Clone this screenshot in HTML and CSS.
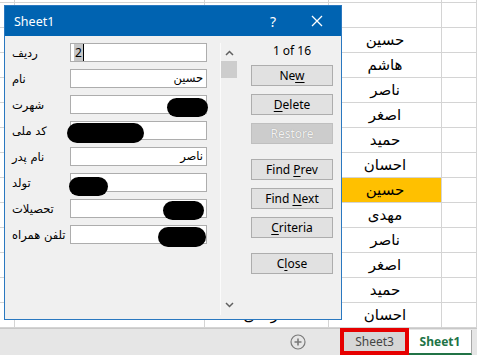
FILE: index.html
```html
<!DOCTYPE html>
<html lang="fa">
<head>
    <meta charset="UTF-8">
    <title>Sheet1 - فرم</title>
    <link rel="stylesheet" href="styles.css">
</head>
<body>
    <div class="sheet">
        <div class="row row-top"><div class="cell"></div><div class="cell"></div><div class="cell"></div><div class="cell"></div><div class="cell"></div></div>
        <div class="row"><div class="cell"></div><div class="cell"></div><div class="cell"></div><div class="cell"></div><div class="cell"></div></div>
        <div class="row"><div class="cell"></div><div class="cell"></div><div class="cell"></div><div class="cell name">حسين</div><div class="cell"></div></div>
        <div class="row"><div class="cell"></div><div class="cell"></div><div class="cell"></div><div class="cell name">هاشم</div><div class="cell"></div></div>
        <div class="row"><div class="cell"></div><div class="cell"></div><div class="cell"></div><div class="cell name">ناصر</div><div class="cell"></div></div>
        <div class="row"><div class="cell"></div><div class="cell"></div><div class="cell"></div><div class="cell name">اصغر</div><div class="cell"></div></div>
        <div class="row"><div class="cell"></div><div class="cell"></div><div class="cell"></div><div class="cell name">حميد</div><div class="cell"></div></div>
        <div class="row"><div class="cell"></div><div class="cell"></div><div class="cell"></div><div class="cell name">احسان</div><div class="cell"></div></div>
        <div class="row"><div class="cell"></div><div class="cell"></div><div class="cell"></div><div class="cell name active">حسين</div><div class="cell"></div></div>
        <div class="row"><div class="cell"></div><div class="cell"></div><div class="cell"></div><div class="cell name">مهدی</div><div class="cell"></div></div>
        <div class="row"><div class="cell"></div><div class="cell"></div><div class="cell"></div><div class="cell name">ناصر</div><div class="cell"></div></div>
        <div class="row"><div class="cell"></div><div class="cell"></div><div class="cell"></div><div class="cell name">اصغر</div><div class="cell"></div></div>
        <div class="row"><div class="cell"></div><div class="cell"></div><div class="cell"></div><div class="cell name">حميد</div><div class="cell"></div></div>
        <div class="row"><div class="cell"></div><div class="cell name">۰۹۱۱۱۱۱۱۱۱۱</div><div class="cell name">کاردانی</div><div class="cell name">احسان</div><div class="cell"></div></div>
    </div>

    <div class="tabbar">
        <div class="add-sheet">
            <svg width="16" height="16" viewBox="0 0 16 16">
                <circle cx="8" cy="8" r="7" fill="none" stroke="#7a7a7a" stroke-width="1.2"/>
                <path d="M8 4.5v7M4.5 8h7" stroke="#7a7a7a" stroke-width="1.6"/>
            </svg>
        </div>
        <div class="tab tab-marked">Sheet3</div>
        <div class="tab tab-active">Sheet1</div>
        <div class="tab-rest"></div>
    </div>

    <div class="dialog">
        <div class="titlebar">
            <span class="title">Sheet1</span>
            <span class="help">?</span>
            <span class="close-x">
                <svg width="12" height="12" viewBox="0 0 12 12">
                    <path d="M1 1l10 10M11 1L1 11" stroke="#fff" stroke-width="1.3"/>
                </svg>
            </span>
        </div>
        <div class="dialog-body">
            <div class="fields">
                <div class="field"><label>ردیف</label><div class="input ltr"><span class="sel">2</span></div></div>
                <div class="field"><label>نام</label><div class="input">حسين</div></div>
                <div class="field"><label>شهرت</label><div class="input"><i class="blot b3"></i></div></div>
                <div class="field"><label>کد ملی</label><div class="input"><i class="blot b4"></i></div></div>
                <div class="field"><label>نام پدر</label><div class="input">ناصر</div></div>
                <div class="field"><label>تولد</label><div class="input"><i class="blot b6"></i></div></div>
                <div class="field"><label>تحصیلات</label><div class="input"><i class="blot b7"></i></div></div>
                <div class="field"><label>تلفن همراه</label><div class="input"><i class="blot b8"></i></div></div>
            </div>

            <div class="scrollbar">
                <svg class="arrow" width="9" height="6" viewBox="0 0 9 6"><path d="M1 5l3.5-3.5L8 5" fill="none" stroke="#606060" stroke-width="1.5"/></svg>
                <div class="thumb"></div>
                <div class="track"></div>
                <svg class="arrow" width="9" height="6" viewBox="0 0 9 6"><path d="M1 1l3.5 3.5L8 1" fill="none" stroke="#606060" stroke-width="1.5"/></svg>
            </div>

            <div class="buttons">
                <div class="counter">1 of 16</div>
                <button>Ne<u>w</u></button>
                <button><u>D</u>elete</button>
                <button class="disabled">Restore</button>
                <button class="group">Find <u>P</u>rev</button>
                <button>Find <u>N</u>ext</button>
                <button><u>C</u>riteria</button>
                <button class="group">C<u>l</u>ose</button>
            </div>
        </div>
    </div>
</body>
</html>
```

FILE: styles.css
```css
body {
    margin: 0;
    width: 477px;
    height: 355px;
    overflow: hidden;
    background: #fff;
    font-family: "Noto Sans", "Open Sans", sans-serif;
    position: relative;
}

/* spreadsheet grid */
.sheet {
    display: flex;
    flex-direction: column;
}

.row {
    display: grid;
    grid-template-columns: 15px 190px 124px 113px 35px;
    height: 25px;
}

.row-top {
    height: 3px;
}

.cell {
    box-sizing: border-box;
    border-right: 1px solid #d4d4d4;
    border-bottom: 1px solid #d4d4d4;
}

.name {
    display: flex;
    align-items: center;
    justify-content: center;
    font-family: "DejaVu Sans", sans-serif;
    font-size: 15px;
    color: #000;
    direction: rtl;
}

.active {
    background: #ffc000;
}

/* sheet tabs */
.tabbar {
    display: flex;
    height: 27px;
    background: #e6e6e6;
    border-top: 1px solid #c8c8c8;
    box-sizing: border-box;
}

.add-sheet {
    width: 340px;
    display: flex;
    justify-content: flex-end;
    align-items: center;
    padding-right: 34px;
    box-sizing: border-box;
}

.add-sheet svg {
    display: block;
}

.tab {
    display: flex;
    align-items: center;
    justify-content: center;
    font-size: 12px;
    box-sizing: border-box;
}

.tab-marked {
    width: 69px;
    margin-top: -1px;
    border: 4px solid #e60000;
    background: #d6d6d6;
    color: #444;
}

.tab-active {
    width: 63px;
    margin-top: 1px;
    background: #fff;
    color: #217346;
    font-weight: bold;
    border-right: 1px solid #a8a8a8;
    border-bottom: 2px solid #217346;
}

.tab-rest {
    flex: 1;
}

/* data form dialog */
.dialog {
    position: absolute;
    left: 4px;
    top: 5px;
    width: 338px;
    height: 315px;
    box-sizing: border-box;
    border: 1px solid #2a78c0;
    background: #f0f0f0;
    display: flex;
    flex-direction: column;
}

.titlebar {
    height: 30px;
    background: #0063b1;
    color: #fff;
    display: flex;
    align-items: center;
    font-size: 12.5px;
}

.title {
    padding-left: 9px;
    flex: 1;
}

.help {
    width: 20px;
    text-align: center;
    font-size: 14px;
    margin-right: 28px;
}

.close-x {
    width: 12px;
    margin-right: 18px;
    display: flex;
}

.dialog-body {
    flex: 1;
    display: flex;
    padding-top: 7px;
}

.fields {
    display: flex;
    flex-direction: column;
    gap: 7px;
    padding-left: 7px;
    width: 202px;
}

.field {
    display: flex;
    align-items: center;
    height: 19px;
}

.field label {
    width: 58px;
    flex-shrink: 0;
    font-family: "DejaVu Sans", sans-serif;
    font-size: 11.5px;
    color: #000;
    text-align: left;
    white-space: nowrap;
}

.input {
    position: relative;
    width: 137px;
    height: 19px;
    box-sizing: border-box;
    border: 1px solid #adadad;
    background: #fff;
    font-family: "DejaVu Sans", sans-serif;
    font-size: 11.5px;
    line-height: 17px;
    padding: 0 3px;
    direction: rtl;
    text-align: right;
}

.input.ltr {
    direction: ltr;
    text-align: left;
}

.sel {
    background: #c6c6c6;
    border-right: 1px solid #000;
    font-family: "Noto Sans", sans-serif;
    font-size: 12px;
    padding: 0 1px;
}

.blot {
    position: absolute;
    background: #000;
    border-radius: 10px;
}

.b3 { left: 96px; top: 2px; width: 41px; height: 19px; }
.b4 { left: -4px; top: 1px; width: 77px; height: 20px; }
.b6 { left: -2px; top: 3px; width: 39px; height: 19px; }
.b7 { left: 92px; top: 1px; width: 41px; height: 19px; }
.b8 { left: 87px; top: 1px; width: 48px; height: 20px; }

.scrollbar {
    margin-left: 6px;
    width: 17px;
    height: 272px;
    box-sizing: border-box;
    border-left: 1px solid #fbfbfb;
    display: flex;
    flex-direction: column;
    align-items: center;
}

.scrollbar .arrow {
    margin: 7px 0 5px;
}

.scrollbar .arrow:last-child {
    margin: 5px 0 7px;
}

.thumb {
    width: 16px;
    height: 17px;
    background: #cdcdcd;
}

.track {
    flex: 1;
}

.buttons {
    margin-left: 14px;
    width: 82px;
    display: flex;
    flex-direction: column;
    gap: 8px;
}

.counter {
    text-align: center;
    font-size: 12px;
    line-height: 16px;
    color: #000;
    margin-bottom: -2px;
}

.buttons button {
    height: 21px;
    padding: 0;
    border: 1px solid #adadad;
    background: #e1e1e1;
    font-family: "Noto Sans", "Open Sans", sans-serif;
    font-size: 12px;
    color: #000;
}

.buttons u {
    text-underline-offset: 2px;
}

.buttons .disabled {
    background: #cccccc;
    border-color: #bfbfbf;
    color: #f2f2f2;
    text-shadow: 0 0 1px #8a8a8a;
}

.buttons .group {
    margin-top: 7px;
}
```
